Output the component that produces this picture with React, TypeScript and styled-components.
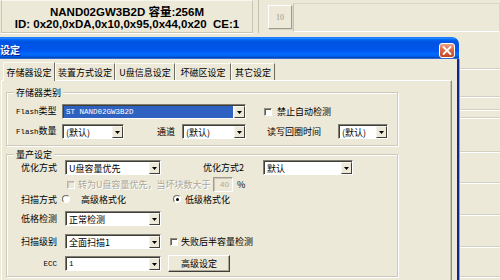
import React from "react";
import styled, { createGlobalStyle } from "styled-components";

const Global = createGlobalStyle`
  html, body { margin: 0; padding: 0; }
  body { width: 500px; height: 280px; overflow: hidden; background: #ECE9D8; }
`;

const CJK = `"Noto Sans CJK SC", "Noto Sans", sans-serif`;
const BG = "#ECE9D8";

const Screen = styled.div`
  position: relative;
  width: 500px;
  height: 280px;
  overflow: hidden;
  background: ${BG};
  font-family: ${CJK};
  font-size: 9px;
  color: #000;
`;

/* ---------- background application ---------- */
const AppBg = styled.div`
  display: flex;
  flex-direction: column;
  height: 100%;
`;
const TopBar = styled.div`
  display: flex;
  height: 37px;
  flex: none;
`;
const InfoPanel = styled.div`
  width: 252px;
  height: 33px;
  box-sizing: border-box;
  margin-left: 1px;
  padding-top: 2px;
  border: 1px solid #C9C6B6;
  border-top-color: #F6F5EE;
  box-shadow: 0 1px 0 #fff;
  display: flex;
  flex-direction: column;
  align-items: center;
  justify-content: center;
  font-family: "Liberation Sans", "Noto Sans CJK SC", sans-serif;
  font-weight: bold;
  font-size: 11.5px;
  line-height: 12px;
  white-space: pre;
`;
const Splitter = styled.div`
  width: 1px;
  height: 33px;
  margin-left: 5px;
  background: #C4C1B0;
`;
const SmallButton = styled.div`
  width: 24px;
  height: 24px;
  margin: 5px 0 0 9px;
  box-sizing: border-box;
  border: 1px solid;
  border-color: #fff #9E9C8E #9E9C8E #fff;
  box-shadow: 1px 1px 0 #D8D5C6;
  display: flex;
  align-items: center;
  justify-content: center;
  font-family: "Liberation Serif", serif;
  font-size: 8px;
  color: #9A988A;
`;
const RightPanel = styled.div`
  flex: 1;
  height: 29px;
  margin: 3px 0 0 1px;
  box-sizing: border-box;
  border: 1px solid #D9D6C8;
  border-left-color: #C6C3B2;
  border-bottom-color: #fff;
`;
const Lower = styled.div`
  flex: 1;
  display: flex;
`;
const LowerFill = styled.div`
  flex: 1;
`;
const RightList = styled.div`
  width: 140px;
  display: flex;
  flex-direction: column;
`;
const ListRow = styled.div<{ $h: number }>`
  height: ${(p) => p.$h}px;
  box-sizing: border-box;
  border-bottom: 1px solid #D3D0C1;
  box-shadow: 0 1px 0 #fff;
  flex: none;
`;

/* ---------- dialog window ---------- */
const Window = styled.div`
  position: absolute;
  left: -6px;
  top: 37px;
  width: 465px;
  height: 262px;
  display: flex;
  flex-direction: column;
`;
const TitleBar = styled.div`
  height: 22px;
  flex: none;
  box-sizing: border-box;
  padding: 4px 4px 0 6px;
  display: flex;
  align-items: center;
  justify-content: space-between;
  border-radius: 0 7px 0 0;
  background: linear-gradient(
    180deg,
    #0058ee 0%,
    #3593ff 4%,
    #288eff 6%,
    #127dff 8%,
    #036ffc 10%,
    #0262ee 14%,
    #0057e5 20%,
    #0054e3 24%,
    #0055eb 56%,
    #005bf5 66%,
    #026afe 76%,
    #0062ef 86%,
    #0052d6 92%,
    #0040ab 94%,
    #4f86e8 100%
  );
`;
const TitleText = styled.span`
  color: #fff;
  font-weight: bold;
  font-size: 10px;
  line-height: 12px;
  text-shadow: 1px 1px 0 #0a1883;
`;
const Body = styled.div`
  flex: 1;
  display: flex;
  flex-direction: column;
  background: ${BG};
  border-left: 3px solid #0831d9;
  border-right: 2px solid #12278c;
  box-shadow: 1px 0 0 #8c9fe2;
  padding: 3px 5px 0 4px;
`;
const TabStrip = styled.div`
  display: flex;
  align-items: flex-end;
  height: 18px;
  padding-left: 2px;
  flex: none;
`;
const Tab = styled.div<{ $w: number; $active?: boolean }>`
  width: ${(p) => p.$w}px;
  height: ${(p) => (p.$active ? 19 : 17)}px;
  margin-bottom: ${(p) => (p.$active ? -1 : 0)}px;
  box-sizing: border-box;
  display: flex;
  align-items: center;
  justify-content: center;
  border-top: 1px solid #fbfaf6;
  border-left: 1px solid #fbfaf6;
  border-right: 1px solid #6f6d62;
  background: ${BG};
  position: relative;
  z-index: ${(p) => (p.$active ? 1 : 0)};
  white-space: nowrap;
  line-height: 11px;
`;
const TabPanel = styled.div`
  flex: 1;
  border-top: 1px solid #fff;
  border-left: 1px solid #fff;
  border-right: 1px solid #8e8c80;
  box-shadow: inset -1px 0 0 #cac7b7;
  padding-left: 4px;
  display: flex;
  flex-direction: column;
`;
const Group = styled.div<{ $mt: number; $pb: number }>`
  width: 392px;
  box-sizing: border-box;
  margin-top: ${(p) => p.$mt}px;
  padding: 0 9px ${(p) => p.$pb}px 9px;
  border: 1px solid #cdcabb;
  box-shadow: inset 1px 1px 0 #fff, 1px 1px 0 #fff;
  display: flex;
  flex-direction: column;
  align-items: flex-start;
`;
const Legend = styled.div`
  margin: -6px 0 0 -2px;
  padding: 0 2px;
  line-height: 11px;
  background: ${BG};
`;
const Row = styled.div<{ $mt: number; $h?: number }>`
  display: flex;
  align-items: center;
  height: ${(p) => p.$h ?? 15}px;
  margin-top: ${(p) => p.$mt}px;
`;
const Label = styled.div<{ $w?: number; $ml?: number; $pl?: number; $right?: boolean; $off?: boolean }>`
  ${(p) => (p.$w ? `width: ${p.$w}px;` : "")}
  margin-left: ${(p) => p.$ml ?? 0}px;
  padding-left: ${(p) => p.$pl ?? 0}px;
  padding-right: ${(p) => (p.$right ? 8 : 0)}px;
  box-sizing: border-box;
  flex: none;
  white-space: nowrap;
  line-height: 11px;
  text-align: ${(p) => (p.$right ? "right" : "left")};
  color: ${(p) => (p.$off ? "#aca899" : "#000")};
  text-shadow: ${(p) => (p.$off ? "1px 1px 0 #fff" : "none")};
`;
const Lat = styled.span`
  font-family: "Liberation Mono", "DejaVu Sans Mono", monospace;
  font-size: 7.5px;
`;
const SelectBox = styled.div<{ $w: number; $ml?: number }>`
  width: ${(p) => p.$w}px;
  margin-left: ${(p) => p.$ml ?? 0}px;
  height: 15px;
  box-sizing: border-box;
  flex: none;
  display: flex;
  align-items: stretch;
  background: #fff;
  border: 1px solid;
  border-color: #7f7d70 #fff #fff #7f7d70;
  box-shadow: inset 1px 1px 0 #3f3e38;
  padding: 1px 0 0 1px;
`;
const SelectText = styled.div<{ $hl?: boolean }>`
  flex: 1;
  display: flex;
  align-items: center;
  padding-left: 2px;
  margin-right: 1px;
  background: ${(p) => (p.$hl ? "#2f62c0" : "transparent")};
  color: ${(p) => (p.$hl ? "#fff" : "#000")};
  white-space: nowrap;
  overflow: hidden;
  line-height: 11px;
`;
const ArrowBtn = styled.div`
  width: 11px;
  flex: none;
  box-sizing: border-box;
  background: ${BG};
  border: 1px solid;
  border-color: #f6f5ef #3f3e38 #3f3e38 #f6f5ef;
  display: flex;
  align-items: center;
  justify-content: center;
`;
const CheckBox = styled.span<{ $off?: boolean; $ml?: number }>`
  width: 8px;
  height: 8px;
  flex: none;
  box-sizing: border-box;
  margin-left: ${(p) => p.$ml ?? 0}px;
  background: ${(p) => (p.$off ? BG : "#fff")};
  border: 1px solid;
  border-color: ${(p) => (p.$off ? "#b8b5a6 #fff #fff #b8b5a6" : "#8e8c80 #fff #fff #8e8c80")};
  box-shadow: inset 1px 1px 0 ${(p) => (p.$off ? "#cfccbd" : "#5d5c54")};
`;
const Radio = styled.span<{ $on?: boolean; $ml?: number }>`
  width: 8px;
  height: 8px;
  flex: none;
  box-sizing: border-box;
  margin-left: ${(p) => p.$ml ?? 0}px;
  border-radius: 50%;
  background: #fff;
  border: 1px solid;
  border-color: #6f6d62 #fff #fff #6f6d62;
  display: flex;
  align-items: center;
  justify-content: center;
  &::after {
    content: "";
    width: 3px;
    height: 3px;
    border-radius: 50%;
    background: ${(p) => (p.$on ? "#000" : "transparent")};
  }
`;
const NumInput = styled.div<{ $ml?: number }>`
  width: 20px;
  height: 15px;
  margin-left: ${(p) => p.$ml ?? 0}px;
  box-sizing: border-box;
  flex: none;
  border: 1px solid;
  border-color: #9e9c8e #fff #fff #9e9c8e;
  box-shadow: inset 1px 1px 0 #c9c6b6;
  display: flex;
  align-items: center;
  justify-content: flex-end;
  padding-right: 3px;
  font-family: "Liberation Sans", sans-serif;
  font-size: 8px;
  color: #aca899;
`;
const PushButton = styled.div<{ $ml?: number }>`
  width: 62px;
  height: 17px;
  margin-left: ${(p) => p.$ml ?? 0}px;
  box-sizing: border-box;
  flex: none;
  display: flex;
  align-items: center;
  justify-content: center;
  background: ${BG};
  border: 1px solid;
  border-color: #fff #3f3e38 #3f3e38 #fff;
  box-shadow: inset -1px -1px 0 #aca899;
  line-height: 11px;
`;

const Arrow = () => (
  <svg width="5" height="3" viewBox="0 0 5 3">
    <path d="M0 0H5L2.5 3Z" fill="#000" />
  </svg>
);

const CloseIcon = () => (
  <svg width="16" height="15" viewBox="0 0 16 15">
    <defs>
      <linearGradient id="cg" x1="0" y1="0" x2="0" y2="1">
        <stop offset="0" stopColor="#f0a68a" />
        <stop offset="0.45" stopColor="#de6a48" />
        <stop offset="1" stopColor="#c2421f" />
      </linearGradient>
    </defs>
    <rect x="0.5" y="0.5" width="15" height="14" rx="2.5" fill="url(#cg)" stroke="#fff" />
    <path d="M4.5 4L11.5 11M11.5 4L4.5 11" stroke="#fff" strokeWidth="1.8" strokeLinecap="round" />
  </svg>
);

const Select = ({ w, ml, hl, children }: { w: number; ml?: number; hl?: boolean; children: React.ReactNode }) => (
  <SelectBox $w={w} $ml={ml}>
    <SelectText $hl={hl}>{children}</SelectText>
    <ArrowBtn>
      <Arrow />
    </ArrowBtn>
  </SelectBox>
);

const tabs = [
  { t: "存储器设定", w: 52, active: true },
  { t: "装置方式设定", w: 60 },
  { t: "U盘信息设定", w: 60 },
  { t: "坏磁区设定", w: 56 },
  { t: "其它设定", w: 44 },
];

const listRows = [32, 28, 13, 8, 34, 31, 32, 32, 30];

export default function App() {
  return (
    <Screen>
      <Global />
      <AppBg>
        <TopBar>
          <InfoPanel>
            <div>NAND02GW3B2D 容量:256M</div>
            <div>ID: 0x20,0xDA,0x10,0x95,0x44,0x20  CE:1</div>
          </InfoPanel>
          <Splitter />
          <SmallButton>10</SmallButton>
          <RightPanel />
        </TopBar>
        <Lower>
          <LowerFill />
          <RightList>
            {listRows.map((h, i) => (
              <ListRow key={i} $h={h} />
            ))}
          </RightList>
        </Lower>
      </AppBg>

      <Window>
        <TitleBar>
          <TitleText>设定</TitleText>
          <CloseIcon />
        </TitleBar>
        <Body>
          <TabStrip>
            {tabs.map((t) => (
              <Tab key={t.t} $w={t.w} $active={t.active}>
                {t.t}
              </Tab>
            ))}
          </TabStrip>
          <TabPanel>
            <Group $mt={11} $pb={6}>
              <Legend>存储器类别</Legend>
              <Row $mt={6}>
                <Label $w={46}>
                  <Lat>Flash</Lat>类型
                </Label>
                <Select w={184} hl>
                  <Lat>ST NAND02GW3B2D</Lat>
                </Select>
                <CheckBox $ml={18} />
                <Label $ml={5}>禁止自动检测</Label>
              </Row>
              <Row $mt={5}>
                <Label $w={46}>
                  <Lat>Flash</Lat>数量
                </Label>
                <Select w={62}>(默认)</Select>
                <Label $ml={33} $w={25}>
                  通道
                </Label>
                <Select w={64}>(默认)</Select>
                <Label $ml={21} $w={71}>
                  读写回圈时间
                </Label>
                <Select w={50}>(默认)</Select>
              </Row>
            </Group>

            <Group $mt={8} $pb={4}>
              <Legend>量产设定</Legend>
              <Row $mt={0}>
                <Label $w={49} $pl={5}>
                  优化方式
                </Label>
                <Select w={96}>U盘容量优先</Select>
                <Label $ml={42} $w={60}>
                  优化方式2
                </Label>
                <Select w={90}>默认</Select>
              </Row>
              <Row $mt={2}>
                <CheckBox $off $ml={51} />
                <Label $ml={3} $w={135} $off>
                  转为U盘容量优先，当坏块数大于
                </Label>
                <NumInput>40</NumInput>
                <Label $ml={4}>%</Label>
              </Row>
              <Row $mt={1} $h={12}>
                <Label $w={46} $pl={5}>
                  扫描方式
                </Label>
                <Radio />
                <Label $ml={11} $w={92}>
                  高级格式化
                </Label>
                <Radio $on />
                <Label $ml={4}>低级格式化</Label>
              </Row>
              <Row $mt={6}>
                <Label $w={49} $pl={5}>
                  低格检测
                </Label>
                <Select w={96}>正常检测</Select>
              </Row>
              <Row $mt={8}>
                <Label $w={49} $pl={5}>
                  扫描级别
                </Label>
                <Select w={96}>全面扫描1</Select>
                <CheckBox $ml={9} />
                <Label $ml={3}>失败后半容量检测</Label>
              </Row>
              <Row $mt={6} $h={17}>
                <Label $w={49} $right>
                  <Lat>ECC</Lat>
                </Label>
                <Select w={96}>
                  <Lat>1</Lat>
                </Select>
                <PushButton $ml={7}>高级设定</PushButton>
              </Row>
            </Group>
          </TabPanel>
        </Body>
      </Window>
    </Screen>
  );
}
